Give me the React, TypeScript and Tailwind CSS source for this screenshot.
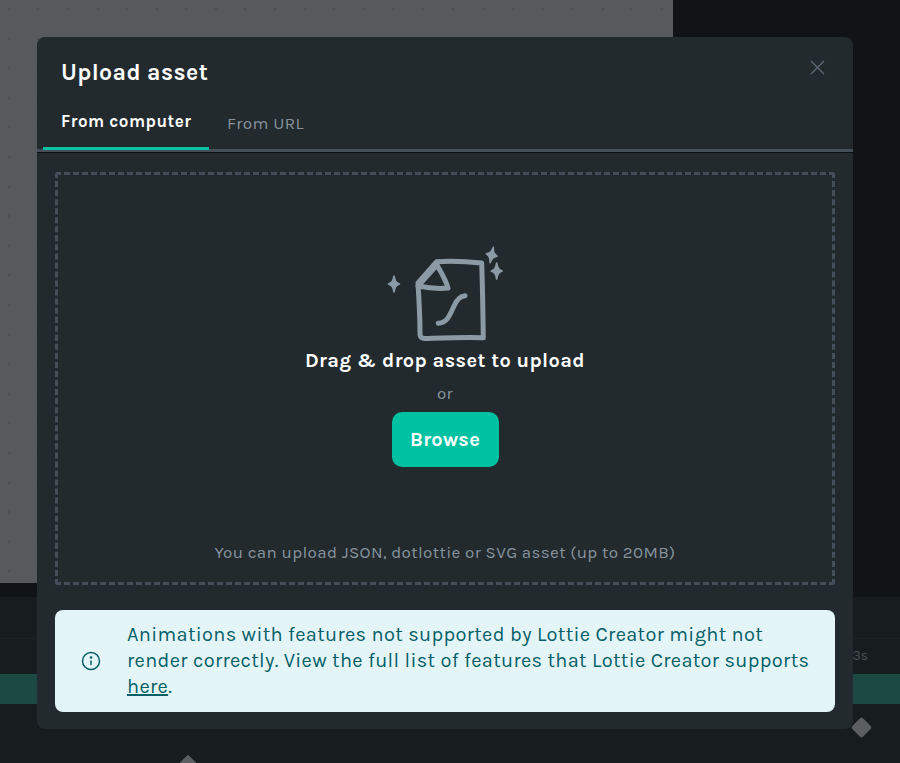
const DOTS_X = [9, 38, 68, 98, 127, 157, 186, 216, 245, 275, 305, 334, 364, 393, 423, 453, 484, 513, 543, 572, 603, 631, 662];
const DOTS_Y = [9, 39, 68, 98, 127, 157, 187, 216, 246, 275, 305, 335, 364, 394, 423, 453, 483, 512, 542, 571];

const Canvas = () => (
  <div className="flex-1 bg-[#565a5d] overflow-hidden">
    <svg width="673" height="583" className="block">
      {DOTS_Y.map((y) =>
        DOTS_X.map((x) => <circle key={`${x}-${y}`} cx={x} cy={y} r="1.500" fill="#4e5255" />)
      )}
    </svg>
  </div>
);

const Timeline = () => (
  <div className="h-[180px] bg-[#171c1f] flex flex-col">
    <div className="h-[14px] bg-[#101417]" />
    <div className="h-[42px] border-b border-[#1c2124]" />
    <div className="h-[35px] flex justify-end items-start">
      <span className="text-[14px] leading-[20px] text-[#4a4f53] mr-[32px] mt-[7px]">3s</span>
    </div>
    <div className="h-[30px] bg-[#1c4a43]" />
  </div>
);

const sparkle = 'M0 -8 C1 -3 2 -1.500 5.500 0 C2 1.500 1 3 0 8 C-1 3 -2 1.500 -5.500 0 C-2 -1.500 -1 -3 0 -8 Z';

const FileIcon = () => (
  <svg width="120" height="100" viewBox="0 0 120 100" fill="none" className="block">
    <g stroke="#8c9aa6" strokeWidth="5" strokeLinecap="round" strokeLinejoin="round">
      <path d="M51.700 16.700 C66 16 82 16.500 96.700 18 C97.500 42 98 68 98.300 92.700 C78 92 56 93 40 93.500 C36 93.500 35 92 35 89 C35 72 34 54 33 38 Z" />
      <path d="M33 41 L52 20 C56 27 61 35 63 43 C53 44 43 43 33 41 Z" />
      <path d="M53.300 78.300 C62 78 65 70 69 61 C72 54 75 51 80 50.700" />
    </g>
    <g fill="#8c9aa6" stroke="#8c9aa6" strokeWidth="1.500" strokeLinejoin="round">
      <path d={sparkle} transform="translate(9 39)" />
      <path d={sparkle} transform="translate(106.700 10) rotate(12)" />
      <path d={sparkle} transform="translate(111.700 26)" />
    </g>
  </svg>
);

const App = () => {
  return (
    <div className="relative h-[763px] w-[900px] overflow-hidden bg-[#101417] font-['Karla','Lato','Noto_Sans',sans-serif]">
      <div className="flex h-[583px]">
        <div className="w-[673px] flex">
          <Canvas />
        </div>
        <div className="flex-1 bg-[#101417]" />
      </div>
      <Timeline />

      <div className="absolute left-[182px] top-[757px] w-3 h-3 rotate-45 rounded-[1px] bg-[#5b5f62]" />
      <div className="absolute left-[854px] top-[720px] w-[15px] h-[15px] rotate-45 rounded-[2px] bg-[#5b5f62]" />

      <div className="absolute left-[37px] top-[37px] w-[816px] h-[692px] bg-[#222a2e] rounded-[8px] flex flex-col">
        <button className="absolute right-[28px] top-[23px] text-[#5f6c76]">
          <svg width="15" height="15" viewBox="0 0 15 15" fill="none" stroke="currentColor" strokeWidth="1.200" className="block">
            <path d="M1 1 L14 14 M14 1 L1 14" />
          </svg>
        </button>

        <h2 className="ml-[24px] mt-[21px] text-[23px] leading-[30px] font-bold text-white tracking-[0.4px]">Upload asset</h2>

        <div className="mt-[9px] h-[55px] border-b-[3px] border-[#454f59] shadow-[0_1px_0_#0c0f11] flex">
          <div className="ml-[6px] w-[166px] h-[53px] border-b-[3px] border-[#00c1a2] pl-[18px] pt-[12px] text-[17px] leading-[24px] font-bold text-white tracking-[0.47px]">
            From computer
          </div>
          <div className="ml-[18px] pt-[14px] text-[17px] leading-[24px] text-[#87939d] tracking-[0.4px]">From URL</div>
        </div>

        <div className="mx-[18px] mt-[20px] h-[413px] border-[3px] border-dashed border-[#454f59] rounded-[3px] flex flex-col items-center">
          <div className="mt-[70px]">
            <FileIcon />
          </div>
          <p className="mt-[3px] text-[20px] leading-[26px] font-bold text-white tracking-[0.38px]">Drag &amp; drop asset to upload</p>
          <p className="mt-[8px] text-[17px] leading-[22px] text-[#87939d] tracking-[0.3px]">or</p>
          <button className="mt-[8px] w-[107px] h-[55px] rounded-[10px] bg-[#00c1a2] text-white text-[20px] font-bold tracking-[0.3px]">Browse</button>
          <p className="mt-auto mb-[19px] text-[17px] leading-[22px] text-[#87939d] tracking-[0.35px]">
            You can upload JSON, dotlottie or SVG asset (up to 20MB)
          </p>
        </div>

        <div className="mx-[18px] mt-[25px] h-[102px] rounded-[8px] bg-[#e4f5f8] flex items-center">
          <svg width="20" height="20" viewBox="0 0 20 20" fill="none" stroke="#045f68" strokeWidth="1.500" className="ml-[26px] shrink-0">
            <circle cx="10" cy="10" r="8.500" />
            <path d="M10 9.500 V14" />
            <circle cx="10" cy="6.500" r="0.600" fill="#045f68" />
          </svg>
          <p className="ml-[26px] w-[700px] text-[20px] leading-[26px] text-[#045f68] tracking-[0.33px]">
            Animations with features not supported by Lottie Creator might not render correctly. View the full list of features that Lottie Creator supports{' '}
            <a className="underline">here</a>.
          </p>
        </div>
      </div>
    </div>
  );
};

export default App;
